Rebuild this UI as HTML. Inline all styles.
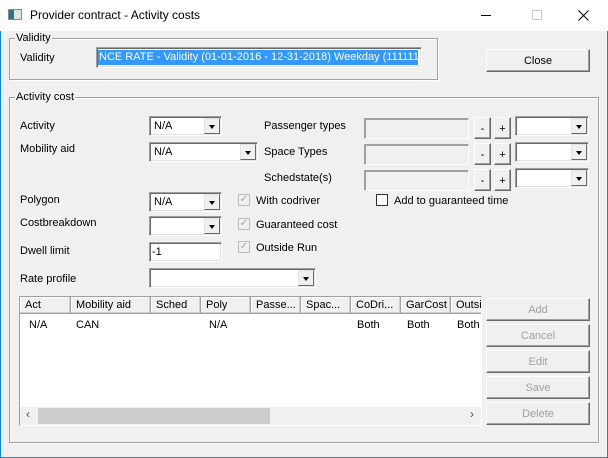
<!DOCTYPE html>
<html><head><style>
*{box-sizing:border-box;margin:0;padding:0}
body{width:608px;height:458px;background:#f0f0f0;font-family:"Liberation Sans",sans-serif;font-size:11px;color:#000;position:relative;overflow:hidden}
.a{position:absolute;white-space:nowrap}
.win{position:absolute;left:0;top:0;width:608px;height:458px;border:1px solid #1883d7;border-top:none}
.tb{position:absolute;left:0;top:0;width:608px;height:31px;background:#fff}
.grp{position:absolute;border:1px solid #a0a0a0;box-shadow:inset 1px 1px #fff,1px 1px #fff}
.gl{position:absolute;background:#f0f0f0;padding:0 1px;line-height:12px}
.sunk{position:absolute;border:1px solid;border-color:#a0a0a0 #fff #fff #a0a0a0;box-shadow:inset 1px 1px #696969,inset -1px -1px #e3e3e3;background:#fff}
.combo .v{position:absolute;left:4px;top:3px}
.combo .b{position:absolute;right:1px;top:1px;bottom:1px;width:16px;background:#f0f0f0;border:1px solid;border-color:#e3e3e3 #696969 #696969 #e3e3e3}
.combo .b:after{content:"";position:absolute;left:4px;top:6px;border:3.5px solid transparent;border-top:4px solid #000;border-bottom:0}
.btn{position:absolute;background:#f0f0f0;border:1px solid;border-color:#fff #696969 #696969 #fff;box-shadow:inset -1px -1px #a0a0a0;text-align:center}
.dis{color:#a0a0a0}
.cb{position:absolute;width:12px;height:12px;border:1px solid #bcbcbc;background:#f0f0f0;color:#a0a0a0;font-size:10px;line-height:10px;text-align:center}
.hd{position:absolute;top:0;height:17px;border-right:1px solid #a0a0a0;border-bottom:1px solid #a0a0a0;box-shadow:inset -1px -1px #d0d0d0, inset 1px 1px #fff;padding:2px 0 0 5px;background:#f0f0f0;overflow:hidden}
</style></head><body>
<div class="win"></div>
<div class="tb">
<div class="a" style="left:8px;top:9px;width:14px;height:11px;border:1px solid #888;background:linear-gradient(90deg,#2f6f8f 0 5px,#d8e8e0 5px)"></div>
<div class="a" style="left:30px;top:8px;font-size:12px">Provider contract - Activity costs</div>
<div class="a" style="left:481px;top:15px;width:10px;height:1px;background:#000"></div>
<div class="a" style="left:532px;top:10px;width:10px;height:10px;border:1px solid #ccc"></div>
<svg class="a" style="left:578px;top:10px" width="11" height="11"><path d="M0.5 0.5L10.5 10.5M10.5 0.5L0.5 10.5" stroke="#000" stroke-width="1"/></svg>
</div>

<div class="grp" style="left:9px;top:38px;width:429px;height:42px"></div>
<div class="gl" style="left:15px;top:32px">Validity</div>
<div class="a" style="left:20px;top:52px">Validity</div>
<div class="sunk" style="left:96px;top:47px;width:326px;height:21px;background:#fff">
<div class="a" style="left:1px;top:2px;width:320px;height:15px;background:#3399ff;color:#fff;padding:1px 0 0 1px;overflow:hidden">NCE RATE - Validity (01-01-2016 - 12-31-2018) Weekday (1111111</div></div>
<div class="btn" style="left:486px;top:49px;width:104px;height:23px;padding-top:5px">Close</div>

<div class="grp" style="left:9px;top:97px;width:590px;height:346px"></div>
<div class="gl" style="left:15px;top:91px">Activity cost</div>

<div class="a" style="left:20px;top:120px">Activity</div>
<div class="a" style="left:20px;top:143px">Mobility aid</div>
<div class="a" style="left:20px;top:194px">Polygon</div>
<div class="a" style="left:20px;top:217px">Costbreakdown</div>
<div class="a" style="left:20px;top:245px">Dwell limit</div>
<div class="a" style="left:20px;top:273px">Rate profile</div>

<div class="sunk combo" style="left:149px;top:116px;width:73px;height:20px"><span class="v">N/A</span><div class="b"></div></div>
<div class="sunk combo" style="left:149px;top:142px;width:109px;height:20px"><span class="v">N/A</span><div class="b"></div></div>
<div class="sunk combo" style="left:149px;top:192px;width:73px;height:20px"><span class="v">N/A</span><div class="b"></div></div>
<div class="sunk combo" style="left:149px;top:216px;width:73px;height:20px"><div class="b"></div></div>
<div class="sunk" style="left:149px;top:242px;width:73px;height:20px"><span class="a" style="left:2px;top:3px">-1</span></div>
<div class="sunk combo" style="left:149px;top:268px;width:167px;height:20px"><div class="b"></div></div>

<div class="a" style="left:264px;top:120px">Passenger types</div>
<div class="a" style="left:264px;top:146px">Space Types</div>
<div class="a" style="left:264px;top:172px">Schedstate(s)</div>

<div class="sunk" style="left:364px;top:118px;width:105px;height:21px;background:#f0f0f0;box-shadow:inset 1px 1px #a0a0a0"></div>
<div class="sunk" style="left:364px;top:144px;width:105px;height:21px;background:#f0f0f0;box-shadow:inset 1px 1px #a0a0a0"></div>
<div class="sunk" style="left:364px;top:170px;width:105px;height:21px;background:#f0f0f0;box-shadow:inset 1px 1px #a0a0a0"></div>
<div class="btn" style="left:474px;top:117px;width:17px;height:22px;padding-top:5px">-</div>
<div class="btn" style="left:494px;top:117px;width:17px;height:22px;padding-top:5px">+</div>
<div class="btn" style="left:474px;top:143px;width:17px;height:22px;padding-top:5px">-</div>
<div class="btn" style="left:494px;top:143px;width:17px;height:22px;padding-top:5px">+</div>
<div class="btn" style="left:474px;top:169px;width:17px;height:22px;padding-top:5px">-</div>
<div class="btn" style="left:494px;top:169px;width:17px;height:22px;padding-top:5px">+</div>
<div class="sunk combo" style="left:515px;top:116px;width:74px;height:20px"><div class="b"></div></div>
<div class="sunk combo" style="left:515px;top:142px;width:74px;height:20px"><div class="b"></div></div>
<div class="sunk combo" style="left:515px;top:168px;width:74px;height:20px"><div class="b"></div></div>

<div class="cb" style="left:238px;top:194px">✓</div><div class="a" style="left:256px;top:195px">With codriver</div>
<div class="cb" style="left:238px;top:218px">✓</div><div class="a" style="left:256px;top:219px">Guaranteed cost</div>
<div class="cb" style="left:238px;top:241px">✓</div><div class="a" style="left:256px;top:242px">Outside Run</div>
<div class="cb" style="left:376px;top:194px;background:#fff;border-color:#333"></div><div class="a" style="left:394px;top:195px">Add to guaranteed time</div>

<div class="a" style="left:19px;top:296px;width:463px;height:130px;background:#fff;border:1px solid;border-color:#a0a0a0 #fff #fff #a0a0a0;overflow:hidden">
<div class="hd" style="left:0;width:51px">Act</div>
<div class="hd" style="left:51px;width:80px">Mobility aid</div>
<div class="hd" style="left:131px;width:50px">Sched</div>
<div class="hd" style="left:181px;width:50px">Poly</div>
<div class="hd" style="left:231px;width:50px">Passe...</div>
<div class="hd" style="left:281px;width:50px">Spac...</div>
<div class="hd" style="left:331px;width:50px">CoDri...</div>
<div class="hd" style="left:381px;width:50px">GarCost</div>
<div class="hd" style="left:431px;width:32px">Outsi</div>
<div class="a" style="left:9px;top:22px">N/A</div>
<div class="a" style="left:56px;top:22px">CAN</div>
<div class="a" style="left:189px;top:22px">N/A</div>
<div class="a" style="left:337px;top:22px">Both</div>
<div class="a" style="left:387px;top:22px">Both</div>
<div class="a" style="left:437px;top:22px">Both</div>
<div class="a" style="left:0;top:110px;width:463px;height:18px;background:#f0f0f0"></div>
<div class="a" style="left:18px;top:111px;width:232px;height:16px;background:#cdcdcd"></div>
<div class="a" style="left:6px;top:110px;font-size:12px;color:#555">‹</div>
<div class="a" style="left:450px;top:110px;font-size:12px;color:#555">›</div>
</div>

<div class="btn dis" style="left:486px;top:298px;width:104px;height:23px;padding-top:5px">Add</div>
<div class="btn dis" style="left:486px;top:324px;width:104px;height:23px;padding-top:5px">Cancel</div>
<div class="btn dis" style="left:486px;top:350px;width:104px;height:23px;padding-top:5px">Edit</div>
<div class="btn dis" style="left:486px;top:376px;width:104px;height:23px;padding-top:5px">Save</div>
<div class="btn dis" style="left:486px;top:402px;width:104px;height:23px;padding-top:5px">Delete</div>
</body></html>
